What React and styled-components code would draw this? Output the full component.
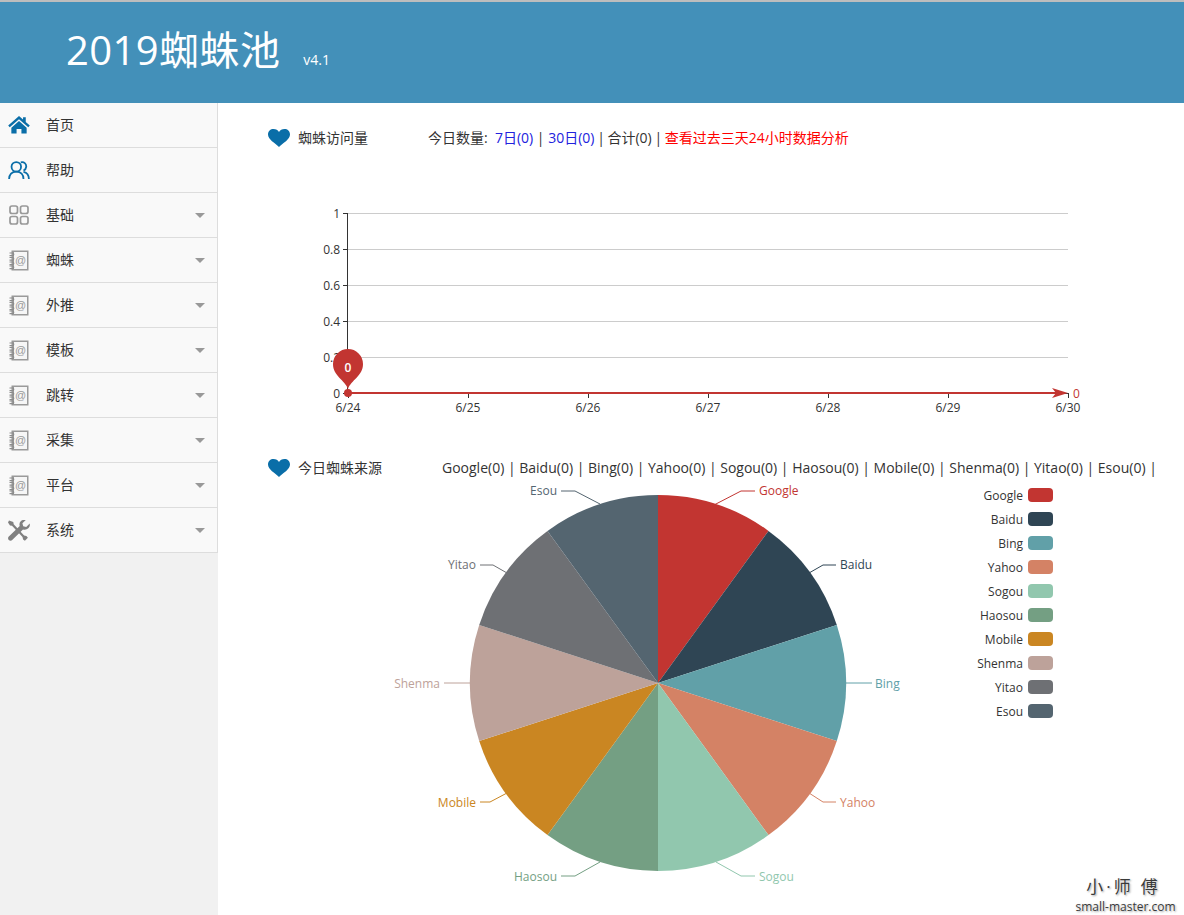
import React from "react";
import styled, { createGlobalStyle } from "styled-components";

const Global = createGlobalStyle`
  html, body { margin: 0; padding: 0; background: #fff; }
  body { font-family: "Open Sans", "Noto Sans CJK SC", sans-serif; color: #333; }
  * { box-sizing: border-box; }
`;

const Page = styled.div`
  position: relative;
  width: 1184px;
  height: 915px;
  overflow: hidden;
  display: flex;
  flex-direction: column;
`;

const Header = styled.header`
  height: 103px;
  flex: none;
  background: #4390b9;
  border-top: 2px solid #bdbdbd;
  display: flex;
  align-items: baseline;
  padding: 18px 0 0 66px;
  color: #fff;
`;

const Title = styled.h1`
  margin: 0;
  font: 400 40px/60px "Open Sans", "Noto Sans CJK SC", sans-serif;
  letter-spacing: 0.4px;
`;

const Version = styled.span`
  margin-left: 23px;
  font-size: 14px;
`;

const Body = styled.div`
  flex: 1;
  display: flex;
  min-height: 0;
`;

const Sidebar = styled.nav`
  width: 218px;
  flex: none;
  background: #f1f1f1;
`;

const NavList = styled.ul`
  margin: 0;
  padding: 0;
  list-style: none;
  border-right: 1px solid #ddd;
`;

const NavItem = styled.li`
  height: 45px;
  display: flex;
  align-items: center;
  background: #f9f9f9;
  border-bottom: 1px solid #ddd;
  padding: 0 12px 0 7px;
  font-size: 14px;
  color: #333;
`;

const IconBox = styled.span`
  width: 24px;
  height: 24px;
  flex: none;
  margin-right: 15px;
  display: flex;
  align-items: center;
  justify-content: center;
`;

const NavLabel = styled.span`
  flex: 1;
  padding-bottom: 2px;
`;

const Caret = styled.span`
  width: 0;
  height: 0;
  border-left: 5px solid transparent;
  border-right: 5px solid transparent;
  border-top: 5px solid #999;
`;

const Main = styled.main`
  flex: 1;
  min-width: 0;
  display: flex;
  flex-direction: column;
`;

const HeadRow = styled.div`
  height: ${(p) => p.$h}px;
  flex: none;
  padding-left: 50px;
  display: flex;
  align-items: center;
  font-size: 14px;
  color: #333;
  white-space: nowrap;
`;

const HeadTitle = styled.span`
  margin-left: 8px;
  width: ${(p) => p.$w}px;
  flex: none;
  font-size: 14px;
  padding-bottom: 2px;
`;

const Stats = styled.span`
  font-size: 14px;
  padding-bottom: 2px;
`;

const Link = styled.span`
  color: ${(p) => p.$color};
`;

const TightSep = styled.span`
  margin: 0 -1px;
`;

const Chart = styled.svg`
  display: block;
  flex: none;
  font-family: "Open Sans", "Noto Sans CJK SC", sans-serif;
`;

const Watermark = styled.div`
  position: absolute;
  right: 8px;
  bottom: 0;
  width: 101px;
  text-align: center;
  color: #3a3a3a;
  text-shadow: 0 0 2px #fff, 1px 1px 2px #999;
`;

const WatermarkCn = styled.div`
  font: 400 17px/25px "Noto Sans CJK TC", sans-serif;
  letter-spacing: 3px;
  padding-right: 4px;
  white-space: nowrap;
`;

const WatermarkDot = styled.span`
  font-family: "Open Sans", sans-serif;
`;

const WatermarkEn = styled.div`
  font-size: 12px;
  line-height: 16px;
  white-space: nowrap;
`;

const Heart = () => (
  <svg width="22" height="18" viewBox="0 0 22 18">
    <path fill="#0a6ea8" d="M11 18C7 14 0 10.500 0 5.500 0 2 2.500 0 5.500 0 8 0 10 1.300 11 3 12 1.300 14 0 16.500 0 19.500 0 22 2 22 5.500 22 10.500 15 14 11 18Z" />
  </svg>
);

const HomeIcon = () => (
  <svg width="22" height="18" viewBox="0 0 24 20">
    <path fill="#0a6ea8" d="M12 0 0 10.500l1.700 1.900L12 3.500l10.300 8.900 1.700-1.900L19.500 6.600V1.500h-3v2.500Z" />
    <path fill="#0a6ea8" d="M12 5.500 3.500 13v6.500h5.800v-5h5.400v5h5.800V13Z" />
  </svg>
);

const UsersIcon = () => (
  <svg width="22" height="18" viewBox="0 0 24 20" fill="none" stroke="#0a6ea8" strokeWidth="2">
    <circle cx="9" cy="6.500" r="5.300" />
    <path d="M14 1.500c3.500-1 6.300 1.500 6 5-.2 2-1.300 3.500-3 4.200" />
    <path d="M1 20c0-5 3-8.300 8-8.300s8 3.300 8 8.300" />
    <path d="M17 12c3.500.8 6 3.500 6 8" />
  </svg>
);

const GridIcon = () => (
  <svg width="20" height="20" viewBox="0 0 20 20" fill="none" stroke="#999" strokeWidth="1.700">
    <rect x="1" y="1" width="7.500" height="7.500" rx="2" />
    <rect x="11.500" y="1" width="7.500" height="7.500" rx="2" />
    <rect x="1" y="11.500" width="7.500" height="7.500" rx="2" />
    <rect x="11.500" y="11.500" width="7.500" height="7.500" rx="2" />
  </svg>
);

const BookIcon = () => (
  <svg width="20" height="21" viewBox="0 0 20 21">
    <rect x="2.500" y="0.500" width="17" height="20" fill="#9a9a9a" />
    <rect x="5" y="2" width="13" height="17" fill="#f6f6f6" />
    <text x="11.500" y="14" fontSize="11" fill="#999" textAnchor="middle" fontFamily="Liberation Sans, sans-serif">@</text>
    {[3, 7.500, 12, 16].map((y) => (
      <path key={y} d={`M0.500 ${y}h3a1.300 1.300 0 0 1 0 2.600H0.500`} fill="none" stroke="#8c8c8c" strokeWidth="1.100" />
    ))}
  </svg>
);

const ToolsIcon = () => (
  <svg width="22" height="21" viewBox="0 0 22 21">
    <path fill="#808080" d="M1 0.500 0 2.500l2 3 2 .3L14.500 17l.6 2.400 1.800 1.400 3-3-1.500-1.800-2.300-.6L5.700 4.200 5.300 2Z" />
    <path fill="#808080" d="M21.700 3.600 18.200 7l-3-.8-.8-3L17.800 0c-3-.8-6 .8-6.300 4-.1.700 0 1.400.2 2L.8 16.500c-1 1-1 2.400 0 3.400s2.500 1 3.400 0L15 9.400c3.700 1.300 7.700-1.800 6.700-5.800Z" />
  </svg>
);

const menu = [
  ["首页", HomeIcon, false],
  ["帮助", UsersIcon, false],
  ["基础", GridIcon, true],
  ["蜘蛛", BookIcon, true],
  ["外推", BookIcon, true],
  ["模板", BookIcon, true],
  ["跳转", BookIcon, true],
  ["采集", BookIcon, true],
  ["平台", BookIcon, true],
  ["系统", ToolsIcon, true],
];

const yTicks = [["1", 213], ["0.8", 249], ["0.6", 285], ["0.4", 321], ["0.2", 357], ["0", 393]];
const xTicks = [["6/24", 348], ["6/25", 468], ["6/26", 588], ["6/27", 708], ["6/28", 828], ["6/29", 948], ["6/30", 1068]];

const LineChart = () => (
  <Chart width="966" height="280" viewBox="218 173 966 280">
    {yTicks.slice(0, 5).map(([, y]) => (
      <line key={y} x1="348" x2="1068" y1={y + 0.5} y2={y + 0.5} stroke="#ccc" />
    ))}
    {yTicks.map(([t, y]) => (
      <g key={t}>
        <line x1="343" x2="348" y1={y + 0.5} y2={y + 0.5} stroke="#333" />
        <text x="340" y={y + 4.500} fontSize="12" fill="#333" textAnchor="end">{t}</text>
      </g>
    ))}
    <line x1="347.500" x2="347.500" y1="213" y2="393" stroke="#333" />
    <line x1="348" x2="1068" y1="393.500" y2="393.500" stroke="#333" />
    {xTicks.map(([t, x]) => (
      <g key={t}>
        <line x1={x + 0.5} x2={x + 0.5} y1="393" y2="398" stroke="#333" />
        <text x={x} y="412" fontSize="12" fill="#333" textAnchor="middle">{t}</text>
      </g>
    ))}
    <line x1="348" x2="1056" y1="393" y2="393" stroke="#c23531" strokeWidth="2" />
    <path d="M1052 388 1068 393 1052 398 1056 393Z" fill="#c23531" />
    <circle cx="348" cy="393" r="4" fill="#c23531" />
    <path d="M348 389C345 380 333 376 333 364A15 15 0 1 1 363 364C363 376 351 380 348 389Z" fill="#c23531" />
    <text x="348" y="372" fontSize="12" fontWeight="600" fill="#fff" textAnchor="middle">0</text>
    <text x="1073" y="398" fontSize="12" fill="#c23531">0</text>
  </Chart>
);

const CX = 658;
const CY = 683;
const R = 188;
const pt = (deg) => {
  const a = (deg * Math.PI) / 180;
  return [CX + R * Math.sin(a), CY - R * Math.cos(a)];
};

const slices = [
  { name: "Google", color: "#c23531", line: "714,505 741,491 755,491", tx: 759, ty: 495, anchor: "start" },
  { name: "Baidu", color: "#2f4554", line: "809,573 823,565 836,565", tx: 840, ty: 569, anchor: "start" },
  { name: "Bing", color: "#61a0a8", line: "846,683 872,683", tx: 875, ty: 688, anchor: "start" },
  { name: "Yahoo", color: "#d48265", line: "809,793 823,802 836,802", tx: 840, ty: 807, anchor: "start" },
  { name: "Sogou", color: "#91c7ae", line: "716,862 741,876 755,876", tx: 759, ty: 881, anchor: "start" },
  { name: "Haosou", color: "#749f83", line: "600,862 575,876 561,876", tx: 557, ty: 881, anchor: "end" },
  { name: "Mobile", color: "#ca8622", line: "507,793 490,802 480,802", tx: 476, ty: 807, anchor: "end" },
  { name: "Shenma", color: "#bda29a", line: "470,683 444,683", tx: 440, ty: 688, anchor: "end" },
  { name: "Yitao", color: "#6e7074", line: "507,573 493,565 480,565", tx: 476, ty: 569, anchor: "end" },
  { name: "Esou", color: "#546570", line: "600,504 575,491 561,491", tx: 557, ty: 495, anchor: "end" },
];

const PieChart = () => (
  <Chart width="966" height="432" viewBox="218 483 966 432">
    {slices.map((s, i) => {
      const [x1, y1] = pt(i * 36);
      const [x2, y2] = pt((i + 1) * 36);
      return (
        <g key={s.name}>
          <path d={`M${CX} ${CY}L${x1} ${y1}A${R} ${R} 0 0 1 ${x2} ${y2}Z`} fill={s.color} />
          <polyline points={s.line} fill="none" stroke={s.color} />
          <text x={s.tx} y={s.ty} fontSize="12" fill={s.color} textAnchor={s.anchor}>{s.name}</text>
        </g>
      );
    })}
    {slices.map((s, i) => (
      <g key={s.name}>
        <text x="1023" y={500 + i * 24} fontSize="12" fill="#333" textAnchor="end">{s.name}</text>
        <rect x="1028" y={488 + i * 24} width="25" height="14" rx="4" fill={s.color} />
      </g>
    ))}
  </Chart>
);

const sources = ["Google", "Baidu", "Bing", "Yahoo", "Sogou", "Haosou", "Mobile", "Shenma", "Yitao", "Esou"];

export default function App() {
  return (
    <Page>
      <Global />
      <Header>
        <Title>2019蜘蛛池</Title>
        <Version>v4.1</Version>
      </Header>
      <Body>
        <Sidebar>
          <NavList>
            {menu.map(([label, Icon, hasCaret]) => (
              <NavItem key={label}>
                <IconBox><Icon /></IconBox>
                <NavLabel>{label}</NavLabel>
                {hasCaret && <Caret />}
              </NavItem>
            ))}
          </NavList>
        </Sidebar>
        <Main>
          <HeadRow $h={70}>
            <Heart />
            <HeadTitle $w={130}>蜘蛛访问量</HeadTitle>
            <Stats>
              今日数量:&nbsp; <Link $color="#2222dd">7日(0)</Link> | <Link $color="#2222dd">30日(0)</Link> <TightSep>|</TightSep> 合计(0) <TightSep>|</TightSep> <Link $color="#ff0000">查看过去三天24小时数据分析</Link>
            </Stats>
          </HeadRow>
          <LineChart />
          <HeadRow $h={30}>
            <Heart />
            <HeadTitle $w={144}>今日蜘蛛来源</HeadTitle>
            <Stats>{sources.map((s) => `${s}(0) | `).join("")}</Stats>
          </HeadRow>
          <PieChart />
        </Main>
      </Body>
      <Watermark>
        <WatermarkCn>小<WatermarkDot>·</WatermarkDot>师 傅</WatermarkCn>
        <WatermarkEn>small-master.com</WatermarkEn>
      </Watermark>
    </Page>
  );
}
